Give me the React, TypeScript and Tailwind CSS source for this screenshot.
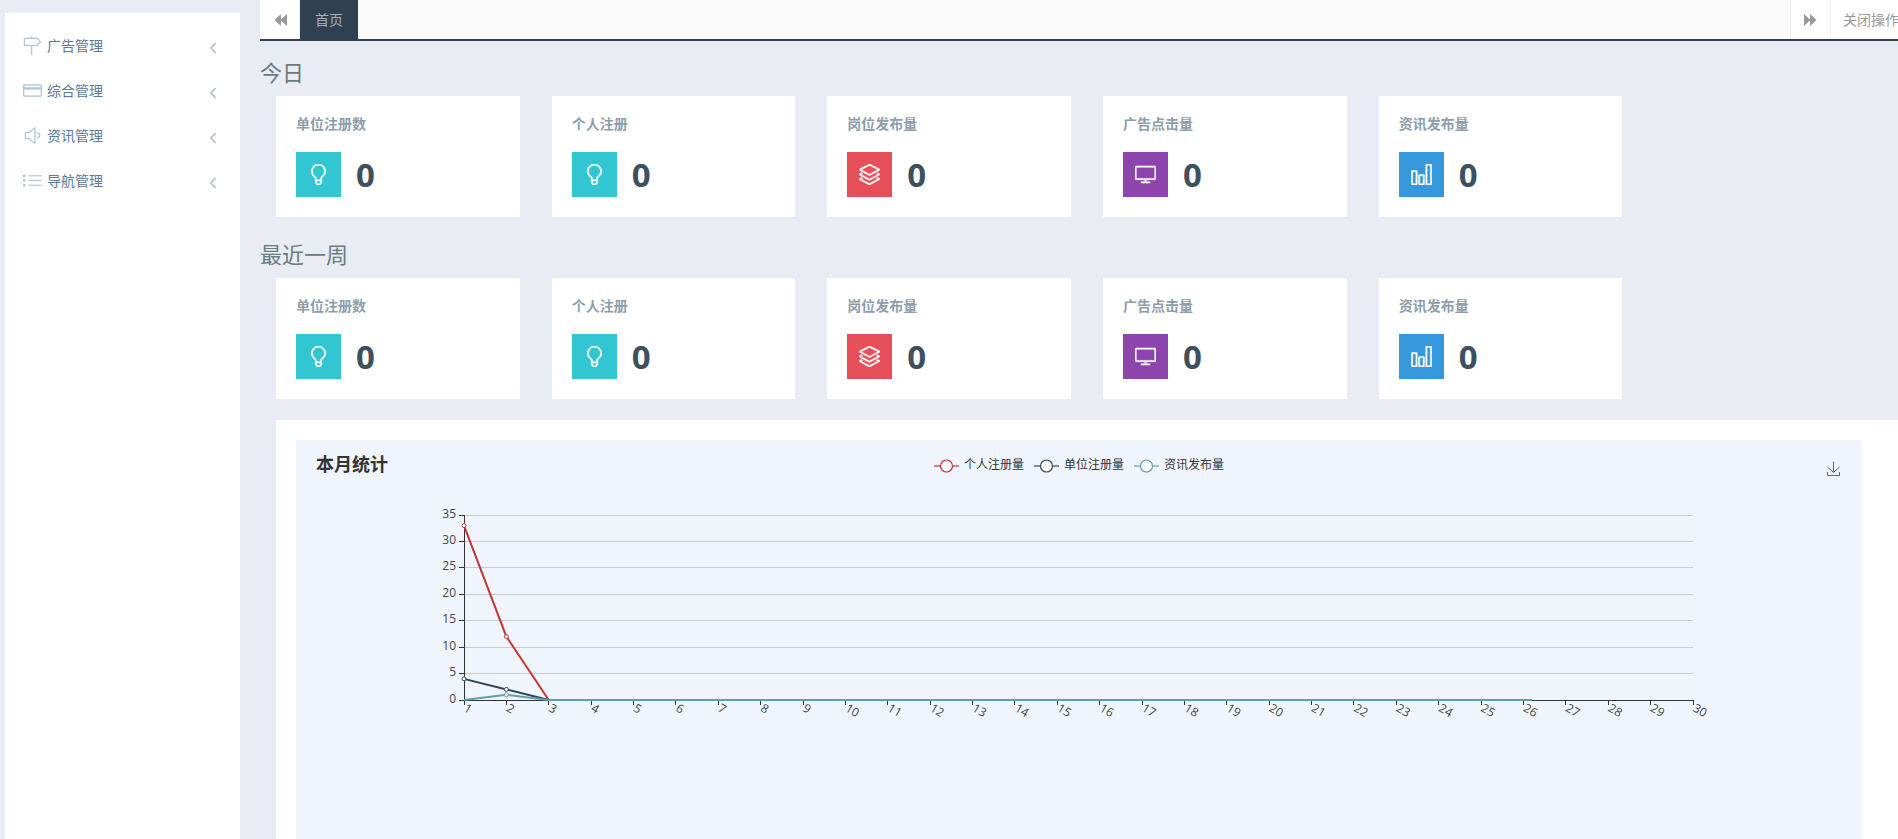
import { useLayoutEffect, useRef, useState } from "react";
import { ChevronLeft } from "lucide-react";
import type { IconType } from "react-icons";
import {
  SlBulb,
  SlChart,
  SlCreditCard,
  SlDirection,
  SlLayers,
  SlList,
  SlScreenDesktop,
  SlVolume1,
} from "react-icons/sl";

const menuItems: { label: string; icon: IconType }[] = [
  { label: "广告管理", icon: SlDirection },
  { label: "综合管理", icon: SlCreditCard },
  { label: "资讯管理", icon: SlVolume1 },
  { label: "导航管理", icon: SlList },
];

const stats: { label: string; icon: IconType; color: string }[] = [
  { label: "单位注册数", icon: SlBulb, color: "bg-[#32c5d2]" },
  { label: "个人注册", icon: SlBulb, color: "bg-[#32c5d2]" },
  { label: "岗位发布量", icon: SlLayers, color: "bg-[#e7505a]" },
  { label: "广告点击量", icon: SlScreenDesktop, color: "bg-[#8e44ad]" },
  { label: "资讯发布量", icon: SlChart, color: "bg-[#3598dc]" },
];

const series = [
  { name: "个人注册量", color: "#c23531", values: [33, 12, 0] },
  { name: "单位注册量", color: "#2f4554", values: [4, 2, 0] },
  { name: "资讯发布量", color: "#61a0a8", values: [0, 1, 0] },
];

const DAYS = 30;
const LAST_DAY = 26.2;
const Y_MAX = 35;
const PLOT_TOP = 39;
const PLOT_HEIGHT = 185;

function Sidebar() {
  return (
    <aside className="mt-[13px] ml-[5px] w-[235px] shrink-0 bg-white pt-[10px]">
      <nav>
        {menuItems.map(({ label, icon: Icon }) => (
          <a
            key={label}
            href="#"
            className="flex h-[45px] items-center px-[18px] text-sm text-[#5c7a99]"
          >
            <Icon strokeWidth={10} className="mr-[5px] h-[19px] w-[19px] text-[#b4c6d6]" />
            <span className="flex-1">{label}</span>
            <ChevronLeft className="mt-1 h-[18px] w-[18px] text-[#a9bccd]" />
          </a>
        ))}
      </nav>
    </aside>
  );
}

function TabBar() {
  return (
    <div className="flex h-[41px] overflow-hidden border-b-2 border-[#2f4050] bg-[#fafafa] text-sm text-[#999]">
      <button
        aria-label="向左"
        className="flex w-10 items-center justify-center border-r border-[#eee] bg-white pl-0.5"
      >
        <svg width="13" height="12" viewBox="0 0 13 12" fill="currentColor">
          <path d="M7 0V12L0.5 6ZM13 0V12L6.5 6Z" />
        </svg>
      </button>
      <button className="w-[58px] bg-[#2f4050] text-[#a7b1c2]">首页</button>
      <div className="flex-1" />
      <button
        aria-label="向右"
        className="flex w-10 items-center justify-center border-l border-[#eee] bg-white"
      >
        <svg width="13" height="12" viewBox="0 0 13 12" fill="currentColor">
          <path d="M0 0V12L6.5 6ZM6 0V12L12.5 6Z" />
        </svg>
      </button>
      <button className="w-[68px] border-l border-[#eee] bg-white pl-3 text-left whitespace-nowrap">
        关闭操作
      </button>
    </div>
  );
}

function StatSection({ title }: { title: string }) {
  return (
    <section>
      <h3 className="mb-[14px] text-[22px] leading-5 text-[#6b7b80]">{title}</h3>
      <div className="grid grid-cols-6 gap-8 pl-4">
        {stats.map(({ label, icon: Icon, color }) => (
          <div key={label} className="bg-white p-5">
            <h4 className="mb-5 text-sm leading-4 font-semibold text-[#8e9daa]">{label}</h4>
            <div className="flex items-center">
              <div className={`flex h-[45px] w-[45px] items-center justify-center text-white ${color}`}>
                <Icon strokeWidth={25} className="h-[21px] w-[21px]" />
              </div>
              <span className="ml-[15px] text-[33px] leading-[45px] font-bold text-[#3e4f5e]">
                0
              </span>
            </div>
          </div>
        ))}
      </div>
    </section>
  );
}

function LineChart({ hidden }: { hidden: string[] }) {
  const box = useRef<HTMLDivElement>(null);
  const [width, setWidth] = useState(1566);

  useLayoutEffect(() => {
    const el = box.current;
    if (!el) return;
    const measure = () => setWidth(el.clientWidth);
    measure();
    const observer = new ResizeObserver(measure);
    observer.observe(el);
    return () => observer.disconnect();
  }, []);

  const margin = Math.floor(width * 0.1076);
  const plotWidth = width - margin * 2 - 1;
  const x = (day: number) => margin + ((day - 1) * plotWidth) / (DAYS - 1);
  const y = (value: number) => PLOT_TOP + PLOT_HEIGHT - (value * PLOT_HEIGHT) / Y_MAX;
  const crisp = (n: number) => Math.floor(n) + 0.5;
  const days = Array.from({ length: DAYS }, (_, i) => i + 1);
  const yTicks = [0, 5, 10, 15, 20, 25, 30, 35];
  const visible = series.filter((s) => !hidden.includes(s.name));

  return (
    <div ref={box}>
      <svg width={width} height={260} className="block text-xs">
        {yTicks.map((t) => (
          <g key={t}>
            {t > 0 && (
              <line
                x1={x(1)}
                x2={x(DAYS)}
                y1={crisp(y(t))}
                y2={crisp(y(t))}
                stroke="#ccc"
              />
            )}
            <line x1={x(1) - 5} x2={x(1)} y1={crisp(y(t))} y2={crisp(y(t))} stroke="#333" />
            <text x={x(1) - 8} y={crisp(y(t)) + 2} textAnchor="end" fill="#444">
              {t}
            </text>
          </g>
        ))}

        {/* Axes */}
        <line x1={crisp(x(1))} x2={crisp(x(1))} y1={y(Y_MAX)} y2={y(0) + 1} stroke="#333" />
        <line x1={x(1)} x2={x(DAYS) + 1} y1={crisp(y(0))} y2={crisp(y(0))} stroke="#333" />
        {days.map((d) => (
          <g key={d}>
            <line x1={crisp(x(d))} x2={crisp(x(d))} y1={y(0)} y2={y(0) + 5} stroke="#333" />
            <text
              transform={`translate(${x(d) + 1} ${y(0) + 7}) rotate(30)`}
              y={4}
              fill="#444"
            >
              {d}
            </text>
          </g>
        ))}

        {/* Series */}
        {visible.map((s) => (
          <g key={s.name} stroke={s.color}>
            <polyline
              points={[...s.values.map((v, i) => `${x(i + 1)},${y(v)}`), `${x(LAST_DAY)},${y(0)}`].join(" ")}
              fill="none"
              strokeWidth={2}
              strokeLinejoin="bevel"
            />
            {s.values.map((v, i) =>
              v > 0 ? <circle key={i} cx={x(i + 1)} cy={y(v)} r={2} fill="#fff" /> : null
            )}
          </g>
        ))}
      </svg>
    </div>
  );
}

function ChartPanel() {
  const [hidden, setHidden] = useState<string[]>([]);

  const toggle = (name: string) => {
    setHidden((prev) =>
      prev.includes(name) ? prev.filter((n) => n !== name) : [...prev, name]
    );
  };

  return (
    <div className="mt-[21px] ml-4 flex flex-1 flex-col bg-white pt-5 pr-9 pl-5">
      <div className="flex-1 bg-[#f0f5fd]">
        <div className="grid h-9 grid-cols-[1fr_auto_1fr] items-center px-5 pt-[11px]">
          <h2 className="text-lg leading-6 font-bold text-[#333]">本月统计</h2>
          <div className="mt-0.5 flex gap-[10px]">
            {series.map((s) => (
              <button
                key={s.name}
                onClick={() => toggle(s.name)}
                className={`flex items-center gap-[5px] text-xs text-[#333] ${
                  hidden.includes(s.name) ? "opacity-40" : ""
                }`}
              >
                <svg width="25" height="14" viewBox="0 0 25 14" stroke={s.color} className="mt-0.5">
                  <path d="M0 7H25" strokeWidth="1.5" opacity="0.8" />
                  <circle cx="12.5" cy="7" r="6" fill="#fff" strokeWidth="1.2" />
                </svg>
                {s.name}
              </button>
            ))}
          </div>
          <button aria-label="保存为图片" className="mt-[10px] h-4 justify-self-end">
            <svg width="16" height="16" viewBox="0 0 16 16" fill="none" stroke="#666">
              <path d="M7.5 0.5V11.5M1.5 6L7.5 11.5L13.5 6M1.5 11V14.5H13.5V11" />
            </svg>
          </button>
        </div>
        <LineChart hidden={hidden} />
      </div>
    </div>
  );
}

export default function App() {
  return (
    <div className="flex min-h-screen bg-[#e9ecf3] font-['Open_Sans','Noto_Sans_CJK_SC',sans-serif]">
      <Sidebar />
      <main className="ml-5 flex min-w-0 flex-1 flex-col">
        <TabBar />
        <div className="mt-[21px] flex flex-col gap-[27px]">
          <StatSection title="今日" />
          <StatSection title="最近一周" />
        </div>
        <ChartPanel />
      </main>
    </div>
  );
}
